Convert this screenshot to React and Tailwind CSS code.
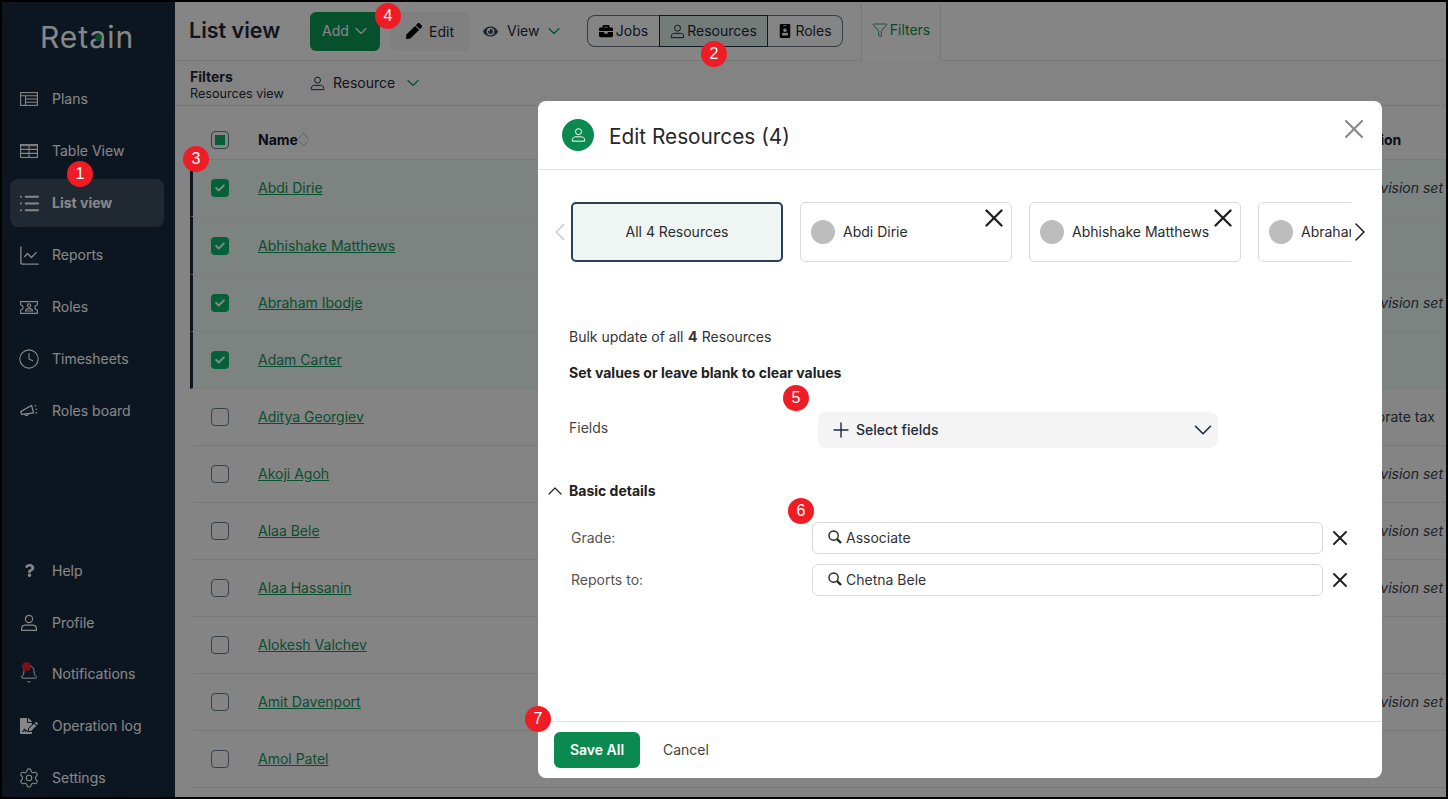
import { Bell, ChevronDown, ChevronLeft, ChevronRight, ChevronUp, Clock, Filter, LineChart, List, Plus, Settings, X } from "lucide-react";
import { FaBriefcase, FaCheck, FaEye, FaFileSignature, FaIdBadge, FaPen, FaQuestion } from "react-icons/fa";

// outline person used in nav, tabs and the modal header
function Person({ className }) {
  return (
    <svg viewBox="0 0 18 18" fill="none" stroke="currentColor" strokeWidth="1.2" className={className}>
      <circle cx="9" cy="5" r="3.6" />
      <path d="M1.6 16.4v-1.6c0-2.2 1.8-3.6 4-3.6h6.8c2.2 0 4 1.4 4 3.6v1.6z" />
    </svg>
  );
}

function PlansIcon({ className }) {
  return (
    <svg viewBox="0 0 18 14" fill="none" stroke="currentColor" strokeWidth="1.1" className={className}>
      <rect x="0.6" y="0.6" width="16.8" height="12.8" />
      <path d="M0.6 3.8h16.8M5.5 3.8v9.6M5.5 7h11.9M5.5 10.2h11.9" />
    </svg>
  );
}

function TableIcon({ className }) {
  return (
    <svg viewBox="0 0 18 14" fill="none" stroke="currentColor" strokeWidth="1.1" className={className}>
      <rect x="0.6" y="0.6" width="16.8" height="12.8" />
      <path d="M0.6 1.8h16.8M0.6 5.4h16.8M0.6 9.4h16.8M9 1.8v11.6" />
    </svg>
  );
}

function RolesIcon({ className }) {
  return (
    <svg viewBox="0 0 18 13" fill="none" stroke="currentColor" strokeWidth="1.1" className={className}>
      <path d="M0.6 0.6h16.8v3.4a2.5 2.5 0 0 0 0 5v3.4H0.6V9a2.5 2.5 0 0 0 0-5z" />
      <circle cx="9" cy="4.6" r="1.7" />
      <path d="M5.4 10c0-1.600 1.400-2.400 3.600-2.400s3.600.8 3.600 2.400z" />
    </svg>
  );
}

function BullhornIcon({ className }) {
  return (
    <svg viewBox="0 0 18 14" fill="none" stroke="currentColor" strokeWidth="1.3" className={className}>
      <path d="M0.7 7.6 11.6 1.4l1.900 7.600-11.800 1.300z" />
      <path d="M4.400 10.100a2.200 2.200 0 0 0 4.200-.9" />
      <path d="M15 2.200l.9-1M15.600 5.400h1.600M15.600 8.400l1.400.8" />
    </svg>
  );
}

function SearchIcon({ className }) {
  return (
    <svg viewBox="0 0 14 14" fill="none" stroke="currentColor" className={className}>
      <circle cx="5.6" cy="5.6" r="4.6" strokeWidth="1.4" />
      <path d="M9 9l4 4" strokeWidth="2.4" />
    </svg>
  );
}

function NavItem({ icon, label, active }) {
  return (
    <div className="h-[52px] py-[2px] pl-[8px] pr-[11px] shrink-0">
      <div className={`h-full flex items-center pl-[10px] rounded-lg text-white ${active ? "bg-[#3e4d5e] font-bold" : ""}`}>
        <span className="w-[18px] h-[18px] flex items-center justify-center shrink-0">{icon}</span>
        <span className="ml-[14px] text-sm">{label}</span>
      </div>
    </div>
  );
}

function BottomItem({ icon, label }) {
  return (
    <div className="h-[51.75px] flex items-center pl-[18px] text-white shrink-0">
      <span className="w-[18px] h-[18px] flex items-center justify-center shrink-0 relative">{icon}</span>
      <span className="ml-[14px] text-sm">{label}</span>
    </div>
  );
}

function Sidebar() {
  return (
    <aside className="w-[173px] shrink-0 bg-[#172a3e] flex flex-col">
      <div className="h-[71px] pl-[38px] pt-[17px] shrink-0">
        <span className="relative inline-block text-[30px] leading-[36px] text-white tracking-[1px]">
          Retain
          <span className="absolute left-[55px] top-[15px] w-[7px] h-[7px] rounded-full bg-[#0a9a58]"></span>
        </span>
      </div>
      <NavItem icon={<PlansIcon className="w-[18px] h-[14px] shrink-0" />} label="Plans" />
      <NavItem icon={<TableIcon className="w-[18px] h-[14px] shrink-0" />} label="Table View" />
      <NavItem icon={<List size={23} strokeWidth={2} className="shrink-0" />} label="List view" active />
      <NavItem icon={<LineChart size={23} strokeWidth={1.4} className="shrink-0" />} label="Reports" />
      <NavItem icon={<RolesIcon className="w-[18px] h-[13px] shrink-0" />} label="Roles" />
      <NavItem icon={<Clock size={22} strokeWidth={1.2} className="shrink-0" />} label="Timesheets" />
      <NavItem icon={<BullhornIcon className="w-[18px] h-[14px] shrink-0" />} label="Roles board" />
      <div className="mt-[108px]">
        <BottomItem icon={<FaQuestion size={13} />} label="Help" />
        <BottomItem icon={<Person className="w-[18px] h-[18px] shrink-0" />} label="Profile" />
        <BottomItem
          icon={
            <>
              <Bell size={20} strokeWidth={1.2} className="shrink-0" />
              <span className="absolute left-[2px] -top-[3px] w-[9px] h-[9px] rounded-full bg-[#e0252e]"></span>
            </>
          }
          label="Notifications"
        />
        <BottomItem icon={<FaFileSignature size={18} />} label="Operation log" />
        <BottomItem icon={<Settings size={22} strokeWidth={1.2} className="shrink-0" />} label="Settings" />
      </div>
    </aside>
  );
}

function TopBar() {
  return (
    <div className="h-[59px] shrink-0 flex items-center pl-[14px] border-b border-[#e3e5e8] bg-[#fbfbfb] relative">
      <h1 className="w-[121px] text-[21.5px] font-semibold text-[#1f2937] -mt-[1px]">List view</h1>
      <button className="w-[70px] h-[39px] rounded-md bg-[#0a9a58] text-white text-sm flex items-center pl-[12px]">
        Add <ChevronDown size={20} strokeWidth={1.3} className="ml-[2px]" />
      </button>
      <button className="ml-[10px] w-[80px] h-[39px] rounded-md bg-[#f1f2f3] text-sm text-[#1f2937] flex items-center pl-[16px]">
        <FaPen size={16} className="text-black" /> <span className="ml-[7px] mt-[2px]">Edit</span>
      </button>
      <div className="ml-[13px] w-[104px] flex items-center text-sm text-[#1f2937]">
        <FaEye size={15} className="text-[#3a4755]" />
        <span className="ml-[9px] -mt-[1px]">View</span>
        <ChevronDown size={20} strokeWidth={1.4} className="ml-[5px] text-[#0a9a58]" />
      </div>
      <div className="flex h-[32px] text-sm text-[#1f2937]">
        <div className="w-[72px] flex items-center justify-center gap-[3px] border border-r-0 border-[#6b7280] rounded-l-lg">
          <FaBriefcase size={14} className="text-black" /> Jobs
        </div>
        <div className="w-[109px] flex items-center justify-center gap-[2px] border border-[#1c2f45] bg-[#dcebe5]">
          <Person className="w-[15px] h-[15px]" /> Resources
        </div>
        <div className="w-[75px] flex items-center justify-center gap-[3px] border border-l-0 border-[#6b7280] rounded-r-lg">
          <FaIdBadge size={14} className="text-black" /> Roles
        </div>
      </div>
      <div className="ml-[18px] w-[80px] self-stretch -mb-px bg-[#fbfbfb] border-l border-r border-[#e3e5e8] flex items-center justify-center gap-[2px] pb-[3px] text-sm text-[#0b8a52]">
        <Filter size={16} strokeWidth={1.2} /> Filters
      </div>
    </div>
  );
}

function FilterRow() {
  return (
    <div className="h-[45px] shrink-0 flex items-center pl-[15px] border-b border-[#e3e5e8] bg-[#f8f8f8]">
      <div className="w-[120px] pt-[3px] text-[#1f2937]">
        <div className="text-sm font-bold leading-[17px]">Filters</div>
        <div className="text-[12.6px] leading-[16px] mt-[1px] whitespace-nowrap">Resources view</div>
      </div>
      <Person className="w-[15px] h-[15px] text-[#1f2937]" />
      <span className="ml-[8px] text-sm text-[#1f2937]">Resource</span>
      <ChevronDown size={20} strokeWidth={1.4} className="ml-[8px] text-[#0a9a58]" />
    </div>
  );
}

const rows = [
  { name: "Abdi Dirie", note: "Supervision set", sel: true },
  { name: "Abhishake Matthews", sel: true },
  { name: "Abraham Ibodje", note: "Supervision set", sel: true },
  { name: "Adam Carter", sel: true },
  { name: "Aditya Georgiev", note: "Corporate tax" },
  { name: "Akoji Agoh", note: "Supervision set" },
  { name: "Alaa Bele", note: "Supervision set" },
  { name: "Alaa Hassanin", note: "Supervision set" },
  { name: "Alokesh Valchev" },
  { name: "Amit Davenport", note: "Supervision set" },
  { name: "Amol Patel" },
];

function ResourceTable() {
  return (
    <div className="mt-[16px] ml-[15px] rounded-t-lg bg-[#fafafa]">
      <div className="h-[38.4px] flex items-center border-b border-[#e3e5e8] pl-[21px] pb-[2px]">
        <span className="w-[18px] h-[18px] rounded-[4px] border border-[#6b7a90] flex items-center justify-center">
          <span className="w-[10px] h-[10px] bg-[#09b56d]"></span>
        </span>
        <span className="ml-[29px] text-sm font-bold text-[#111827]">Name</span>
        <svg viewBox="0 0 11 15" className="w-[11px] h-[15px] text-[#b4b4b4]" fill="none" stroke="currentColor">
          <path d="M1 6.500 5.500 1l4.500 5.500M1 8.500 5.500 14l4.500-5.500" />
        </svg>
        <span className="ml-auto w-[104px] text-sm font-bold text-[#111827]">Location</span>
      </div>
      {rows.map((row) => (
        <div
          key={row.name}
          className={`h-[57.1px] flex items-center border-b border-l-[3px] pl-[18px] ${row.sel ? "bg-[#eaf7f2] border-l-[#172a3e] border-b-[#e9efec]" : "bg-[#f9f9f9] border-l-transparent border-b-[#e3e5e8]"}`}
        >
          {row.sel ? (
            <span className="w-[18px] h-[18px] rounded-[4px] bg-[#09b56d] flex items-center justify-center text-white">
              <FaCheck size={10} />
            </span>
          ) : (
            <span className="w-[18px] h-[18px] rounded-[4px] border border-[#6b7a90]"></span>
          )}
          <a className="ml-[29px] text-sm text-[#12955c] underline">{row.name}</a>
          <span className={`ml-auto text-sm text-[#374151] whitespace-nowrap ${row.note === "Corporate tax" ? "pr-[11px]" : "pr-[3px] italic"}`}>
            {row.note}
          </span>
        </div>
      ))}
    </div>
  );
}

function PersonCard({ name }) {
  return (
    <div className="relative w-[212px] h-[60px] shrink-0 rounded-[5px] border border-[#dcdcdc] flex items-center pl-[10px] text-sm text-[#2b2b2b]">
      <span className="w-[24px] h-[24px] rounded-full bg-[#bdbdbd] shrink-0"></span>
      <span className="ml-[8px] -mt-[1px] whitespace-nowrap">{name}</span>
      <X size={30} strokeWidth={1.9} className="absolute right-[2px] top-0 text-[#1f1f1f]" />
    </div>
  );
}

function FieldRow({ label, value, first }) {
  return (
    <div className={`flex items-center pl-[33px] ${first ? "mt-[21px]" : "mt-[10px]"}`}>
      <span className="w-[241px] text-sm text-[#555]">{label}</span>
      <div className="w-[511px] h-[32px] rounded-md border border-[#d9d9d9] flex items-center pl-[15px] text-sm text-[#333]">
        <SearchIcon className="w-[14px] h-[14px] text-[#222] -mt-[3px]" />
        <span className="ml-[4px]">{value}</span>
      </div>
      <X size={24} strokeWidth={1.9} className="ml-[5px] text-[#222]" />
    </div>
  );
}

function EditModal() {
  return (
    <div className="absolute left-[536px] top-[99px] w-[844px] h-[677px] bg-white rounded-lg flex flex-col">
      <div className="h-[69px] shrink-0 border-b border-[#e3e3e3] flex items-center pl-[24px] relative">
        <span className="w-[32px] h-[32px] rounded-full bg-[#0a8a4f] flex items-center justify-center text-white">
          <Person className="w-[15px] h-[16px]" />
        </span>
        <h2 className="ml-[15px] mt-[3px] text-[20.8px] text-[#27272a]">Edit Resources (4)</h2>
        <X size={32} strokeWidth={1.6} className="absolute right-[12px] top-[12px] text-[#8a8a8a]" />
      </div>

      <div className="mt-[32px] flex items-center">
        <div className="w-[44px] -mr-[11px] flex justify-center">
          <ChevronLeft size={30} strokeWidth={1} className="text-[#c8c8c8] shrink-0" />
        </div>
        <div className="w-[780px] flex gap-[17px] overflow-hidden">
          <div className="w-[212px] h-[60px] shrink-0 rounded-[5px] border-2 border-[#2b3f55] bg-[#eef5f3] flex items-center justify-center text-sm text-[#2b2b2b]">
            All 4 Resources
          </div>
          <PersonCard name="Abdi Dirie" />
          <PersonCard name="Abhishake Matthews" />
          <PersonCard name="Abraham Ibodje" />
        </div>
        <div className="w-[18px] flex justify-center">
          <ChevronRight size={32} strokeWidth={1.2} className="text-[#222] shrink-0" />
        </div>
      </div>

      <div className="mt-[65px] pl-[31px] text-sm leading-5 text-[#333]">
        Bulk update of all <b className="mx-[0.5px] font-bold">4</b> Resources
      </div>
      <div className="mt-[16px] pl-[31px] text-sm leading-5 font-bold text-[#222]">Set values or leave blank to clear values</div>

      <div className="mt-[29px] pl-[31px] flex items-start">
        <span className="w-[249px] pt-[6px] text-sm leading-5 text-[#444]">Fields</span>
        <div className="w-[400px] h-[36px] rounded-lg bg-[#f4f4f5] flex items-center pl-[11px] pr-[-1px] text-sm font-medium text-[#1c2a3a]">
          <Plus size={24} strokeWidth={1.4} />
          <span className="ml-[3px]">Select fields</span>
          <ChevronDown size={30} strokeWidth={1.3} className="ml-auto" />
        </div>
      </div>

      <div className="mt-[33px] h-5 pl-[5px] flex items-center text-sm leading-5 font-bold text-[#222]">
        <ChevronUp size={24} strokeWidth={1.2} className="shrink-0" />
        <span className="ml-[2px]">Basic details</span>
      </div>
      <FieldRow label="Grade:" value="Associate" first />
      <FieldRow label="Reports to:" value="Chetna Bele" />

      <div className="mt-auto h-[57px] shrink-0 border-t border-[#e3e3e3] flex items-center pl-[16px]">
        <button className="w-[86px] h-[36px] rounded-md bg-[#0a8a4f] text-sm font-semibold text-white">Save All</button>
        <button className="ml-[23px] text-sm text-[#444]">Cancel</button>
      </div>
    </div>
  );
}

// numbered callouts sitting on top of the screenshot
const badges = [
  { n: 1, cls: "left-[65px] top-[159px]" },
  { n: 2, cls: "left-[699px] top-[39px]" },
  { n: 3, cls: "left-[181px] top-[144px]" },
  { n: 4, cls: "left-[373px] top-[1px]" },
  { n: 5, cls: "left-[781px] top-[383px]" },
  { n: 6, cls: "left-[786px] top-[496px]" },
  { n: 7, cls: "left-[523px] top-[704px]" },
];

export default function App() {
  return (
    <div className="relative w-[1448px] h-[799px] border-2 border-black overflow-hidden font-[Inter,sans-serif] bg-[#fafafa] flex">
      <Sidebar />
      <main className="flex-1 flex flex-col min-w-0">
        <TopBar />
        <FilterRow />
        <ResourceTable />
      </main>
      <div className="absolute inset-0 bg-black/[0.47]"></div>
      <EditModal />
      {badges.map((b) => (
        <span
          key={b.n}
          className={`absolute ${b.cls} w-[26px] h-[26px] rounded-full bg-[#ee1c25] text-white flex items-center justify-center text-[16px] font-[Liberation_Sans,sans-serif]`}
        >
          {b.n}
        </span>
      ))}
    </div>
  );
}
